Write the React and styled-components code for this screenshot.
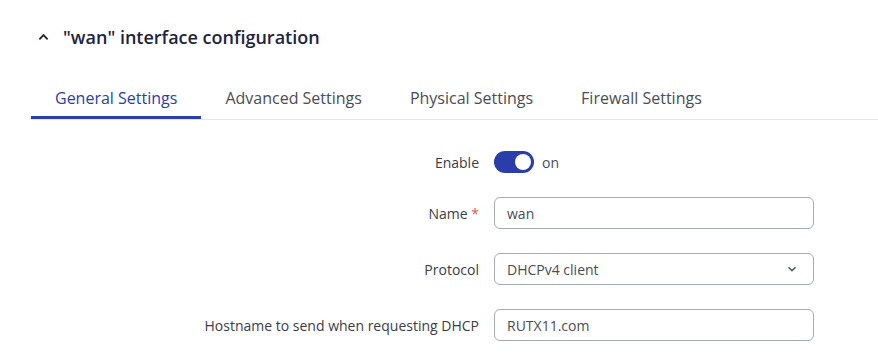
import React from 'react'
import styled, { createGlobalStyle } from 'styled-components'

const GlobalStyle = createGlobalStyle`
  body {
    margin: 0;
    background: #ffffff;
    font-family: "Open Sans", "Liberation Sans", sans-serif;
  }
`;

const tabs = ['General Settings', 'Advanced Settings', 'Physical Settings', 'Firewall Settings'];

function App() {
    return (
        <Page>
            <GlobalStyle />
            <Header>
                <Chevron viewBox="0 0 12 8">
                    <path d="M1.5 6.5 L6 2 L10.5 6.5" />
                </Chevron>
                <Title>"wan" interface configuration</Title>
            </Header>
            <TabList>
                {tabs.map((t, i) => (
                    <Tab key={t} active={i === 0}>{t}</Tab>
                ))}
            </TabList>
            <Form>
                <Label>Enable</Label>
                <ToggleRow>
                    <Toggle><Knob /></Toggle>
                    <ToggleText>on</ToggleText>
                </ToggleRow>

                <Label>Name <Required>*</Required></Label>
                <Input>wan</Input>

                <Label>Protocol</Label>
                <Input>
                    DHCPv4 client
                    <SelectArrow viewBox="0 0 10 6">
                        <path d="M1.5 1.2 L5 4.6 L8.5 1.2" />
                    </SelectArrow>
                </Input>

                <Label>Hostname to send when requesting DHCP</Label>
                <Input>RUTX11.com</Input>
            </Form>
        </Page>
    )
}

export default App


const Page = styled.div`
    padding: 0 0 0 31px;
    height: 356px;
    overflow: hidden;
`;

const Header = styled.div`
    display: flex;
    align-items: center;
    height: 28px;
    padding-top: 23px;
    padding-left: 7px;
`;

const Chevron = styled.svg`
    width: 11px;
    height: 8px;
    fill: none;
    stroke: #1c2438;
    stroke-width: 2;
    margin-right: 14px;
`;

const Title = styled.h2`
    margin: 0;
    font-size: 18px;
    font-weight: 600;
    color: #1c2440;
    letter-spacing: 0;
`;

const TabList = styled.div`
    display: flex;
    margin-top: 28px;
    border-bottom: 1px solid #e4e4ec;
`;

const Tab = styled.div`
    padding: 8px 24px 7px;
    font-size: 16px;
    line-height: 22px;
    color: ${p => (p.active ? '#2a3dab' : '#4a4d55')};
    border-bottom: 3px solid ${p => (p.active ? '#2a3dab' : 'transparent')};
`;

const Form = styled.div`
    display: grid;
    grid-template-columns: 448px 320px;
    column-gap: 15px;
    row-gap: 24px;
    margin-top: 31px;
    align-items: center;
`;

const Label = styled.div`
    text-align: right;
    font-size: 14px;
    color: #3a3d45;
`;

const Required = styled.span`
    color: #dc5a4b;
`;

const ToggleRow = styled.div`
    display: flex;
    align-items: center;
    height: 22px;
`;

const Toggle = styled.div`
    width: 40px;
    height: 22px;
    border-radius: 11px;
    background: #2a3dab;
    display: flex;
    align-items: center;
    justify-content: flex-end;
    padding: 0 3px;
    box-sizing: border-box;
`;

const Knob = styled.div`
    width: 16px;
    height: 16px;
    border-radius: 50%;
    background: #ffffff;
`;

const ToggleText = styled.span`
    margin-left: 8px;
    font-size: 14px;
    color: #4a4d55;
`;

const Input = styled.div`
    box-sizing: border-box;
    height: 32px;
    border: 1px solid #a3abbb;
    border-radius: 6px;
    padding: 0 12px;
    display: flex;
    align-items: center;
    justify-content: space-between;
    font-size: 14px;
    color: #4a4d55;
`;

const SelectArrow = styled.svg`
    width: 10px;
    height: 6px;
    fill: none;
    stroke: #555a66;
    stroke-width: 1.5;
    margin-right: 4px;
`;
